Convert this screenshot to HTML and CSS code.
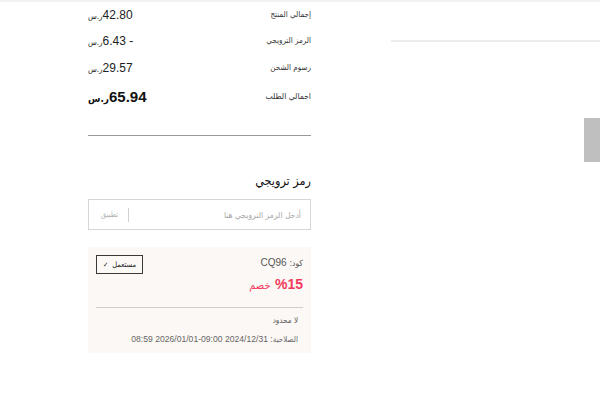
FILE: index.html
```html
<!DOCTYPE html>
<html lang="ar">
<head>
<meta charset="utf-8">
<link rel="stylesheet" href="styles.css">
</head>
<body>
<div class="page">
  <div class="summary" dir="rtl">
    <div class="row first">
      <span class="label">إجمالي المنتج</span>
      <span class="value">42.80<span class="cur">ر.س</span></span>
    </div>
    <div class="row">
      <span class="label">الرمز الترويجي</span>
      <span class="value">- 6.43<span class="cur">ر.س</span></span>
    </div>
    <div class="row">
      <span class="label">رسوم الشحن</span>
      <span class="value">29.57<span class="cur">ر.س</span></span>
    </div>
    <div class="row total">
      <span class="label">اجمالي الطلب</span>
      <span class="value">65.94<span class="cur">ر.س</span></span>
    </div>
    <div class="divider"></div>
    <h2 class="promo-title">رمز ترويجي</h2>
    <div class="promo-input">
      <span class="placeholder">أدخل الرمز الترويجي هنا</span>
      <span class="apply">تطبيق</span>
    </div>
    <div class="coupon">
      <div class="coupon-top">
        <div class="coupon-info">
          <div class="code"><span class="ar">كود:</span> CQ96</div>
          <div class="discount"><bdo dir="ltr" class="pct">%15</bdo> <span class="ar">خصم</span></div>
        </div>
        <div class="used-btn"><span class="ar">مستعمل</span> <span class="check">✓</span></div>
      </div>
      <div class="coupon-divider"></div>
      <div class="coupon-bottom">
        <div class="limit">لا محدود</div>
        <div class="validity"><span class="ar">الصلاحية:</span> 2024/12/31 09:00&#8208;2026/01/01 08:59</div>
      </div>
    </div>
  </div>
  <div class="side"></div>
</div>
<div class="scroll-thumb"></div>
</body>
</html>
```
FILE: styles.css
```css
html, body {
  margin: 0;
  padding: 0;
  background: #ffffff;
}
body {
  border-top: 2px solid #f2f2f2;
  font-family: "Liberation Sans", "DejaVu Sans Condensed", "DejaVu Sans", sans-serif;
  color: #222;
  position: relative;
  height: 398px;
  overflow: hidden;
}
.page {
  display: flex;
  padding-left: 88px;
  gap: 80px;
}
.summary {
  width: 223px;
  display: flex;
  flex-direction: column;
}
.row {
  height: 27px;
  display: flex;
  align-items: center;
  justify-content: space-between;
}
.row.first {
  height: 25px;
}
.row.total {
  height: 30px;
}
.label,
.ar,
.cur,
.promo-title,
.placeholder,
.apply,
.limit {
  font-family: "DejaVu Sans Condensed", "DejaVu Sans", sans-serif;
}
.label {
  font-size: 8px;
  color: #333;
}
.value {
  font-size: 12px;
  color: #222;
  white-space: nowrap;
}
.cur {
  font-size: 8px;
}
.total .label {
  font-size: 8.5px;
}
.total .value {
  font-size: 15px;
  font-weight: bold;
  color: #111;
}
.total .cur {
  font-size: 10px;
  font-weight: bold;
}
.divider {
  margin-top: 24px;
  height: 1px;
  background: #999;
}
.promo-title {
  margin: 35px 0 0 0;
  font-size: 12.5px;
  line-height: 20px;
  font-weight: normal;
  color: #111;
}
.promo-input {
  margin-top: 8px;
  height: 29px;
  border: 1px solid #d6d6d6;
  display: flex;
  align-items: center;
  justify-content: space-between;
  padding: 0 9px;
}
.placeholder {
  font-size: 8.5px;
  color: #a8a8a8;
}
.apply {
  font-size: 7.5px;
  color: #b0b0b0;
  border-right: 1px solid #d0d0d0;
  padding-right: 10px;
  margin-left: 3px;
  line-height: 14px;
}
.coupon {
  margin-top: 17px;
  background: #fcf8f5;
  padding: 8px 8px 6px 8px;
}
.coupon-top {
  display: flex;
  justify-content: space-between;
  align-items: flex-start;
}
.coupon-info {
  display: flex;
  flex-direction: column;
}
.code {
  font-size: 10px;
  height: 16px;
  line-height: 16px;
  color: #555;
}
.code .ar {
  font-size: 8.5px;
}
.discount {
  margin-top: 3px;
  height: 20px;
  line-height: 20px;
  color: #f2385c;
  white-space: nowrap;
}
.pct {
  font-size: 14px;
  font-weight: bold;
}
.discount .ar {
  font-size: 11px;
}
.used-btn {
  width: 45px;
  height: 17px;
  border: 1px solid #3a3a3a;
  display: flex;
  align-items: center;
  justify-content: center;
  gap: 4px;
  color: #222;
}
.used-btn .ar {
  font-size: 7.5px;
}
.check {
  font-size: 7px;
}
.coupon-divider {
  margin-top: 13px;
  height: 1px;
  background: #cfcfcf;
}
.coupon-bottom {
  padding-right: 5px;
}
.limit {
  margin-top: 5px;
  font-size: 8px;
  height: 16px;
  line-height: 16px;
  color: #555;
}
.validity {
  margin-top: 2px;
  font-size: 8.6px;
  height: 16px;
  line-height: 16px;
  color: #666;
  white-space: nowrap;
}
.validity .ar {
  font-size: 8px;
}
.side {
  flex: 1;
  margin-top: 38px;
  border-top: 2px solid #ececec;
  height: 0;
}
.scroll-thumb {
  position: absolute;
  left: 584px;
  top: 116px;
  width: 16px;
  height: 44px;
  background: #bfbfbf;
}
```
